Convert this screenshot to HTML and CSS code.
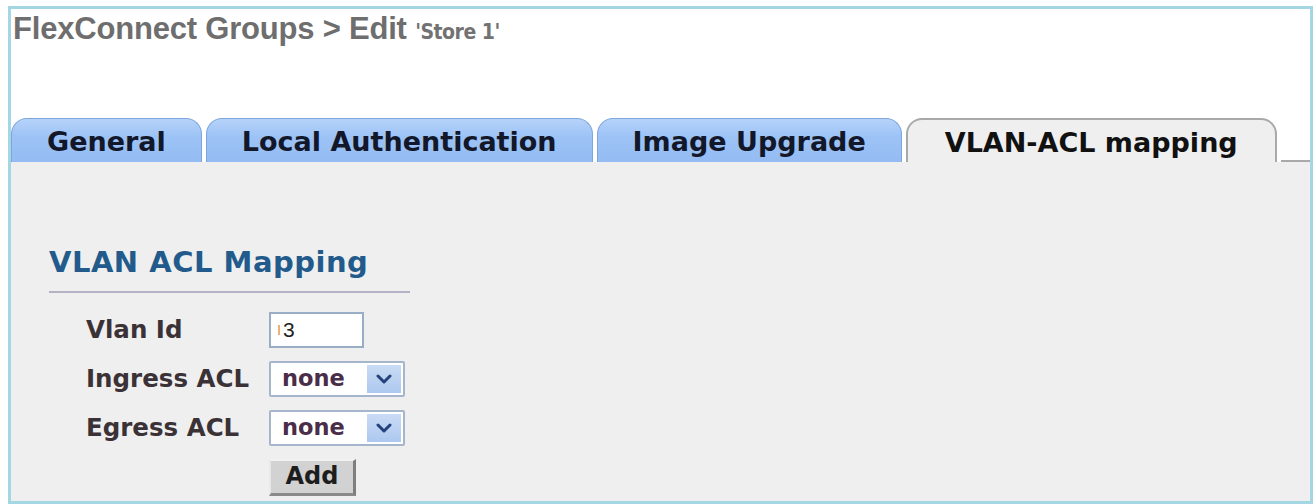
FILE: index.html
```html
<!DOCTYPE html>
<html lang="en">
<head>
<meta charset="utf-8">
<title>FlexConnect Groups &gt; Edit</title>
<link rel="stylesheet" href="styles.css">
</head>
<body>
<div class="frame">
  <h1 class="page-title">FlexConnect Groups &gt; Edit <span class="group-name">'Store 1'</span></h1>

  <ul class="tabs">
    <li class="tab">General</li>
    <li class="tab">Local Authentication</li>
    <li class="tab">Image Upgrade</li>
    <li class="tab tab-active">VLAN-ACL mapping</li>
    <li class="tab-rest"></li>
  </ul>

  <div class="panel">
    <h2 class="section-title">VLAN ACL Mapping</h2>
    <div class="section-rule"></div>

    <form class="acl-form">
      <label class="field-label" for="vlan-id">Vlan Id</label>
      <div class="text-input" id="vlan-id"><span class="caret"></span>3</div>

      <label class="field-label">Ingress ACL</label>
      <div class="select">
        <span class="select-value">none</span>
        <span class="select-arrow">
          <svg width="16" height="10" viewBox="0 0 16 10"><polyline points="2,2 8,8 14,2" fill="none" stroke="#23427a" stroke-width="3" stroke-linejoin="round" stroke-linecap="round"/></svg>
        </span>
      </div>

      <label class="field-label">Egress ACL</label>
      <div class="select">
        <span class="select-value">none</span>
        <span class="select-arrow">
          <svg width="16" height="10" viewBox="0 0 16 10"><polyline points="2,2 8,8 14,2" fill="none" stroke="#23427a" stroke-width="3" stroke-linejoin="round" stroke-linecap="round"/></svg>
        </span>
      </div>

      <span></span>
      <div class="button">Add</div>
    </form>
  </div>
</div>
</body>
</html>
```

FILE: styles.css
```css
html, body {
  margin: 0;
  padding: 0;
  background: #ffffff;
}

body {
  width: 1316px;
  height: 504px;
  overflow: hidden;
}

.frame {
  box-sizing: border-box;
  margin: 6px 3px 0 8px;
  height: 498px;
  border: 3px solid #a4d6e4;
  display: flex;
  flex-direction: column;
}

/* ---------- title ---------- */
.page-title {
  margin: 0;
  height: 109px;
  box-sizing: border-box;
  padding: 2px 0 0 2px;
  font-family: "Liberation Sans", Arial, sans-serif;
  font-weight: bold;
  font-size: 31px;
  line-height: 36px;
  color: #6e6e6e;
  letter-spacing: -0.2px;
}

.group-name {
  font-family: "DejaVu Sans Condensed", "Liberation Sans", Arial, sans-serif;
  font-stretch: condensed;
  font-size: 21px;
  font-weight: bold;
  letter-spacing: -0.5px;
  color: #727272;
}

/* ---------- tabs ---------- */
.tabs {
  list-style: none;
  margin: 0;
  padding: 0;
  height: 44px;
  display: flex;
  gap: 4px;
  align-items: stretch;
}

.tab {
  box-sizing: border-box;
  padding: 3px 35px 0;
  font-family: "DejaVu Sans", Verdana, sans-serif;
  font-weight: bold;
  font-size: 27px;
  line-height: 40px;
  color: #12182a;
  white-space: nowrap;
  background: linear-gradient(#b6d3fa, #9dc3f6 40%, #94bcf3);
  border: 1px solid #7ea6dc;
  border-bottom: none;
  border-radius: 16px 16px 0 0;
}

.tab-active {
  background: #efefef;
  border: 2px solid #a9a9a9;
  border-bottom: none;
  color: #111111;
  padding-left: 37px;
  padding-right: 37px;
}

.tab-rest {
  flex: 1;
  border-bottom: 2px solid #a9a9a9;
}

/* ---------- panel ---------- */
.panel {
  flex: 1;
  background: #efefef;
  padding: 83px 0 0 38px;
}

.section-title {
  margin: 0;
  font-family: "DejaVu Sans", Verdana, sans-serif;
  font-weight: bold;
  font-size: 29px;
  line-height: 34px;
  letter-spacing: 0.5px;
  color: #225b8b;
}

.section-rule {
  width: 361px;
  height: 2px;
  margin-top: 12px;
  background: #b4b2c4;
}

/* ---------- form ---------- */
.acl-form {
  margin: 19px 0 0 37px;
  display: grid;
  grid-template-columns: 183px auto;
  grid-auto-rows: 36px;
  row-gap: 13px;
  align-items: center;
  justify-items: start;
}

.field-label {
  font-family: "DejaVu Sans", Verdana, sans-serif;
  font-weight: bold;
  font-size: 24.5px;
  line-height: 30px;
  color: #3b3237;
}

.text-input {
  box-sizing: border-box;
  width: 95px;
  height: 36px;
  background: #ffffff;
  border: 2px solid #99adc6;
  padding-left: 7px;
  font-family: "Liberation Sans", Arial, sans-serif;
  font-size: 21px;
  line-height: 32px;
  color: #222222;
  display: flex;
  align-items: center;
}

.caret {
  width: 2px;
  height: 10px;
  margin-right: 3px;
  background: #f0b070;
}

.select {
  box-sizing: border-box;
  width: 136px;
  height: 36px;
  background: #ffffff;
  border: 2px solid #a4b5cc;
  border-radius: 2px;
  display: flex;
  align-items: stretch;
}

.select-value {
  flex: 1;
  padding-left: 11px;
  font-family: "DejaVu Sans", Verdana, sans-serif;
  font-weight: bold;
  font-size: 22.5px;
  line-height: 30px;
  color: #4a2d48;
}

.select-arrow {
  width: 34px;
  margin: 2px 2px 2px 0;
  background: linear-gradient(#c9dbf5, #adc8ef);
  display: flex;
  align-items: center;
  justify-content: center;
}

.button {
  box-sizing: border-box;
  width: 87px;
  height: 37px;
  background: #d2d2d2;
  border-top: 2px solid #f2f2f2;
  border-left: 2px solid #e8e8e8;
  border-right: 3px solid #7e7e7e;
  border-bottom: 3px solid #8a8a8a;
  text-align: center;
  font-family: "DejaVu Sans", Verdana, sans-serif;
  font-weight: bold;
  font-size: 24px;
  line-height: 31px;
  color: #1d1d1d;
}
```
